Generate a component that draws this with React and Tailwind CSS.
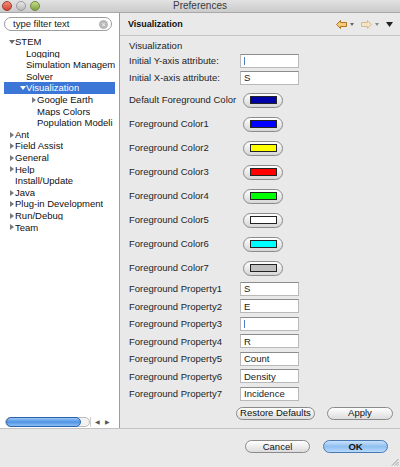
import React from 'react';

const tree = [
  { label: 'STEM', level: 0, open: true },
  { label: 'Logging', level: 1 },
  { label: 'Simulation Managem', level: 1 },
  { label: 'Solver', level: 1 },
  { label: 'Visualization', level: 1, open: true, selected: true },
  { label: 'Google Earth', level: 2, closed: true },
  { label: 'Maps Colors', level: 2 },
  { label: 'Population Modeli', level: 2 },
  { label: 'Ant', level: 0, closed: true },
  { label: 'Field Assist', level: 0, closed: true },
  { label: 'General', level: 0, closed: true },
  { label: 'Help', level: 0, closed: true },
  { label: 'Install/Update', level: 0 },
  { label: 'Java', level: 0, closed: true },
  { label: 'Plug-in Development', level: 0, closed: true },
  { label: 'Run/Debug', level: 0, closed: true },
  { label: 'Team', level: 0, closed: true },
];

const colors = [
  ['Default Foreground Color', '#0000a8'],
  ['Foreground Color1', '#0000ff'],
  ['Foreground Color2', '#ffff00'],
  ['Foreground Color3', '#ff0000'],
  ['Foreground Color4', '#00ff00'],
  ['Foreground Color5', '#ffffff'],
  ['Foreground Color6', '#00ffff'],
  ['Foreground Color7', '#c0c0c0'],
];

const properties = [
  ['Foreground Property1', 'S'],
  ['Foreground Property2', 'E'],
  ['Foreground Property3', 'I', true],
  ['Foreground Property4', 'R'],
  ['Foreground Property5', 'Count'],
  ['Foreground Property6', 'Density'],
  ['Foreground Property7', 'Incidence'],
];

function Twisty({ open, closed, selected }) {
  if (open) {
    return (
      <svg width="6" height="6" viewBox="0 0 6 6" className="shrink-0">
        <path d="M0 1 L6 1 L3 5 Z" fill={selected ? '#ffffff' : '#6b6b6b'} />
      </svg>
    );
  }
  if (closed) {
    return (
      <svg width="6" height="6" viewBox="0 0 6 6" className="shrink-0">
        <path d="M1 0 L5 3 L1 6 Z" fill="#7a7a7a" />
      </svg>
    );
  }
  return <span className="w-[6px] shrink-0" />;
}

function TextBox({ value, cursor }) {
  return (
    <div className="flex h-[14px] w-[59px] items-center border border-[#b9b9b9] border-t-[#8c8c8c] bg-white pl-[3px] text-[9.5px] leading-none">
      {cursor ? (
        <span className="h-[8px] w-px bg-[#4f7fc6]" />
      ) : (
        <span className="text-[#1a1a1a]">{value}</span>
      )}
    </div>
  );
}

function ColorButton({ color }) {
  return (
    <div className="flex h-[15px] w-[40px] items-center justify-center rounded-full border border-[#8a8a8a] bg-gradient-to-b from-[#ffffff] to-[#d6d6d6]">
      <div className="h-[8px] w-[27px] border border-[#222]" style={{ backgroundColor: color }} />
    </div>
  );
}

function PillButton({ children, className, primary }) {
  return (
    <button
      className={
        'flex h-[13px] items-center justify-center rounded-full border text-[9.5px] leading-none text-[#111] ' +
        (primary
          ? 'border-[#4a78b0] bg-gradient-to-b from-[#c9e2fb] via-[#8fc0f0] to-[#b6dafc] '
          : 'border-[#8a8a8a] bg-gradient-to-b from-[#ffffff] to-[#dcdcdc] ') +
        className
      }
    >
      {children}
    </button>
  );
}

export default function App() {
  return (
    <div className="flex h-[467px] w-[400px] flex-col overflow-hidden bg-[#e9e9e9] font-['Liberation_Sans',Arial,sans-serif] text-[#1e1e1e]">
      {/* title bar */}
      <div className="relative flex h-[13px] shrink-0 items-center justify-center border-b border-[#a8a8a8] bg-gradient-to-b from-[#e2e2e2] to-[#cbcbcb]">
        <div className="absolute left-[2px] top-[1px] flex gap-[4px]">
          <span className="h-[10px] w-[10px] rounded-full border border-[#a03a30] bg-gradient-to-b from-[#f28a7c] to-[#d2402e]" />
          <span className="h-[10px] w-[10px] rounded-full border border-[#9a9a9a] bg-gradient-to-b from-[#e8e8e8] to-[#b8b8b8]" />
          <span className="h-[10px] w-[10px] rounded-full border border-[#6f8a3a] bg-gradient-to-b from-[#c6dc8a] to-[#7fa23e]" />
        </div>
        <span className="text-[10px] leading-none text-[#3a3a3a]">Preferences</span>
      </div>

      {/* body */}
      <div className="flex h-[415px] shrink-0">
        {/* left tree */}
        <div className="flex w-[120px] shrink-0 flex-col border-r border-[#9c9c9c] bg-white">
          <div className="mx-[4px] mt-[4px] flex h-[14px] w-[108px] items-center rounded-full border border-[#9d9d9d] bg-white pl-[8px] pr-[3px] text-[9.5px] leading-none">
            <span className="flex-1 text-[#1a1a1a]">type filter text</span>
            <span className="flex h-[9px] w-[9px] items-center justify-center rounded-full bg-[#b8b8b8] text-[7px] leading-none text-white">×</span>
          </div>
          <div className="mt-[5px] flex flex-col">
            {tree.map((item) => (
              <div
                key={item.label}
                className={
                  'mx-[4px] flex h-[11.6px] items-center whitespace-nowrap text-[9.5px] leading-none ' +
                  (item.selected ? 'bg-[#3c76d6] text-white' : 'text-[#111]')
                }
                style={{ paddingLeft: 5 + item.level * 11 }}
              >
                <Twisty open={item.open} closed={item.closed} selected={item.selected} />
                <span className="overflow-hidden">{item.label}</span>
              </div>
            ))}
          </div>
          <div className="mt-auto mb-[1px] ml-[5px] flex h-[10px] items-center">
            <div className="flex h-[10px] w-[85px] items-center rounded-full border border-[#bcbcbc] bg-[#f3f3f3]">
              <div className="h-[10px] w-[75px] rounded-full border border-[#2a60b0] bg-gradient-to-b from-[#9cc7f3] via-[#4f93e4] to-[#8dc0f3]" />
            </div>
            <div className="flex h-[10px] items-center gap-[5px] border-l border-[#cfcfcf] px-[4px] text-[6px] leading-none text-[#555]">
              <span>◀</span>
              <span>▶</span>
            </div>
          </div>
        </div>

        {/* right pane */}
        <div className="flex flex-1 flex-col">
          <div className="flex h-[23px] shrink-0 items-center justify-between border-b border-[#c6c6c6] pl-[8px] pr-[7px]">
            <span className="text-[9px] font-bold leading-none text-[#111]">Visualization</span>
            <div className="flex items-center gap-[3px]">
              <svg width="11" height="9" viewBox="0 0 11 9">
                <path d="M0.5 4.5 L4.5 0.5 L4.5 2.5 L10.5 2.5 L10.5 6.5 L4.5 6.5 L4.5 8.5 Z" fill="#f6cc7a" stroke="#b07420" strokeWidth="1" />
              </svg>
              <svg width="4" height="3" viewBox="0 0 4 3"><path d="M0 0 L4 0 L2 3 Z" fill="#666" /></svg>
              <svg width="11" height="9" viewBox="0 0 11 9" className="ml-[4px]">
                <path d="M10.5 4.5 L6.5 0.5 L6.5 2.5 L0.5 2.5 L0.5 6.5 L6.5 6.5 L6.5 8.5 Z" fill="#f3e3c6" stroke="#d9bb8c" strokeWidth="1" />
              </svg>
              <svg width="4" height="3" viewBox="0 0 4 3"><path d="M0 0 L4 0 L2 3 Z" fill="#888" /></svg>
              <svg width="7" height="5" viewBox="0 0 7 5" className="ml-[4px]"><path d="M0 0 L7 0 L3.5 5 Z" fill="#222" /></svg>
            </div>
          </div>

          <div className="flex flex-col pl-[9px] pt-[4px] text-[9.5px] leading-none">
            <div className="flex h-[12px] items-center">Visualization</div>
            <div className="mt-[2px] flex h-[14px] items-center">
              <span className="w-[111px]">Initial Y-axis attribute:</span>
              <TextBox value="I" cursor />
            </div>
            <div className="mt-[3px] flex h-[14px] items-center">
              <span className="w-[111px]">Initial X-axis attribute:</span>
              <TextBox value="S" />
            </div>
            <div className="mt-[3px] flex flex-col">
              {colors.map(([label, color]) => (
                <div key={label} className="flex h-[24px] items-center">
                  <span className="w-[114px]">{label}</span>
                  <ColorButton color={color} />
                </div>
              ))}
            </div>
            <div className="flex flex-col">
              {properties.map(([label, value, cursor]) => (
                <div key={label} className="flex h-[17.5px] items-center">
                  <span className="w-[111px]">{label}</span>
                  <TextBox value={value} cursor={cursor} />
                </div>
              ))}
            </div>
            <div className="mt-[4px] flex justify-end gap-[12px] pr-[7px]">
              <PillButton className="w-[79px]">Restore Defaults</PillButton>
              <PillButton className="w-[66px]">Apply</PillButton>
            </div>
          </div>
        </div>
      </div>

      {/* footer */}
      <div className="relative flex flex-1 justify-end gap-[13px] border-t border-[#c2c2c2] pr-[12px] pt-[11px]">
        <PillButton className="w-[65px]">Cancel</PillButton>
        <PillButton className="w-[65px] font-bold" primary>OK</PillButton>
        <svg width="8" height="8" viewBox="0 0 8 8" className="absolute bottom-[1px] right-[1px]">
          <path d="M7.5 1 L1 7.5 M7.5 4 L4 7.5 M7.5 6.5 L6.5 7.5" stroke="#9a9a9a" strokeWidth="1" />
        </svg>
      </div>
    </div>
  );
}
